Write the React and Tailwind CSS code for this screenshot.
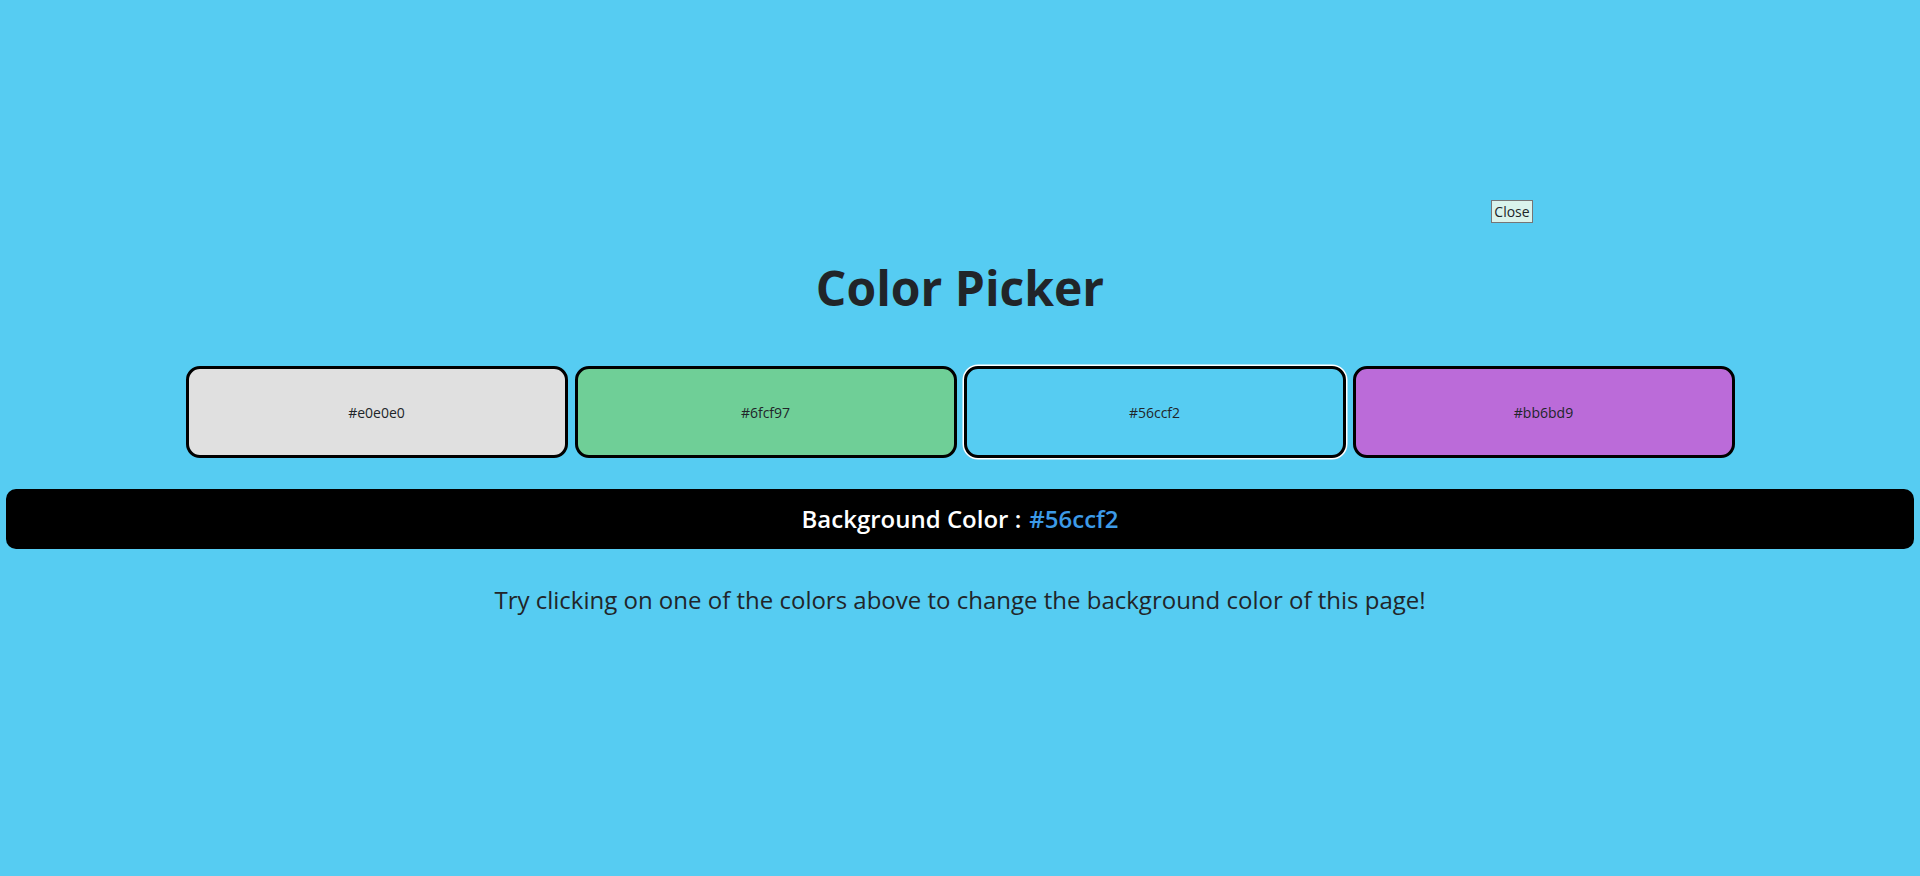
import React, { useState } from 'react';

const colors = ['#e0e0e0', '#6fcf97', '#56ccf2', '#bb6bd9'];

const App = () => {
  const [bg, setBg] = useState('#56ccf2');

  return (
    <div
      className="relative min-h-screen w-full font-['Open_Sans','Liberation_Sans',sans-serif] text-[#212529]"
      style={{ backgroundColor: bg }}
    >
      {/* close button sits over the page */}
      <button className="absolute left-[1491px] top-[200px] h-[23px] w-[42px] border border-[#767676] bg-[#d9f3ec] text-[14px] leading-none text-[#212529]">
        Close
      </button>

      <div className="flex flex-col items-center pt-[256px]">
        <h1 className="text-[48px] font-bold leading-[64px] text-[#212529]">Color Picker</h1>

        <div className="mt-[46px] flex gap-[7px]">
          {colors.map((c) => (
            <button
              key={c}
              onClick={() => setBg(c)}
              className={
                c === bg
                  ? 'flex h-[92px] w-[382px] items-center justify-center rounded-[14px] border-[3px] border-black text-[14px] text-[#212529] shadow-[0_0_0_1.5px_#ffffff]'
                  : 'flex h-[92px] w-[382px] items-center justify-center rounded-[14px] border-[3px] border-black text-[14px] text-[#212529]'
              }
              style={{ backgroundColor: c }}
            >
              {c}
            </button>
          ))}
        </div>
      </div>

      <div className="mx-[6px] mt-[31px] flex h-[60px] items-center justify-center rounded-[10px] bg-black text-[24px] font-semibold">
        <span className="text-white">Background Color : </span>
        <span className="ml-[8px] text-[#3d9ae6]">{bg}</span>
      </div>

      <p className="mt-[34px] text-center text-[24px] leading-[34px] text-[#212529]">
        Try clicking on one of the colors above to change the background color of this page!
      </p>
    </div>
  );
};

export default App;
